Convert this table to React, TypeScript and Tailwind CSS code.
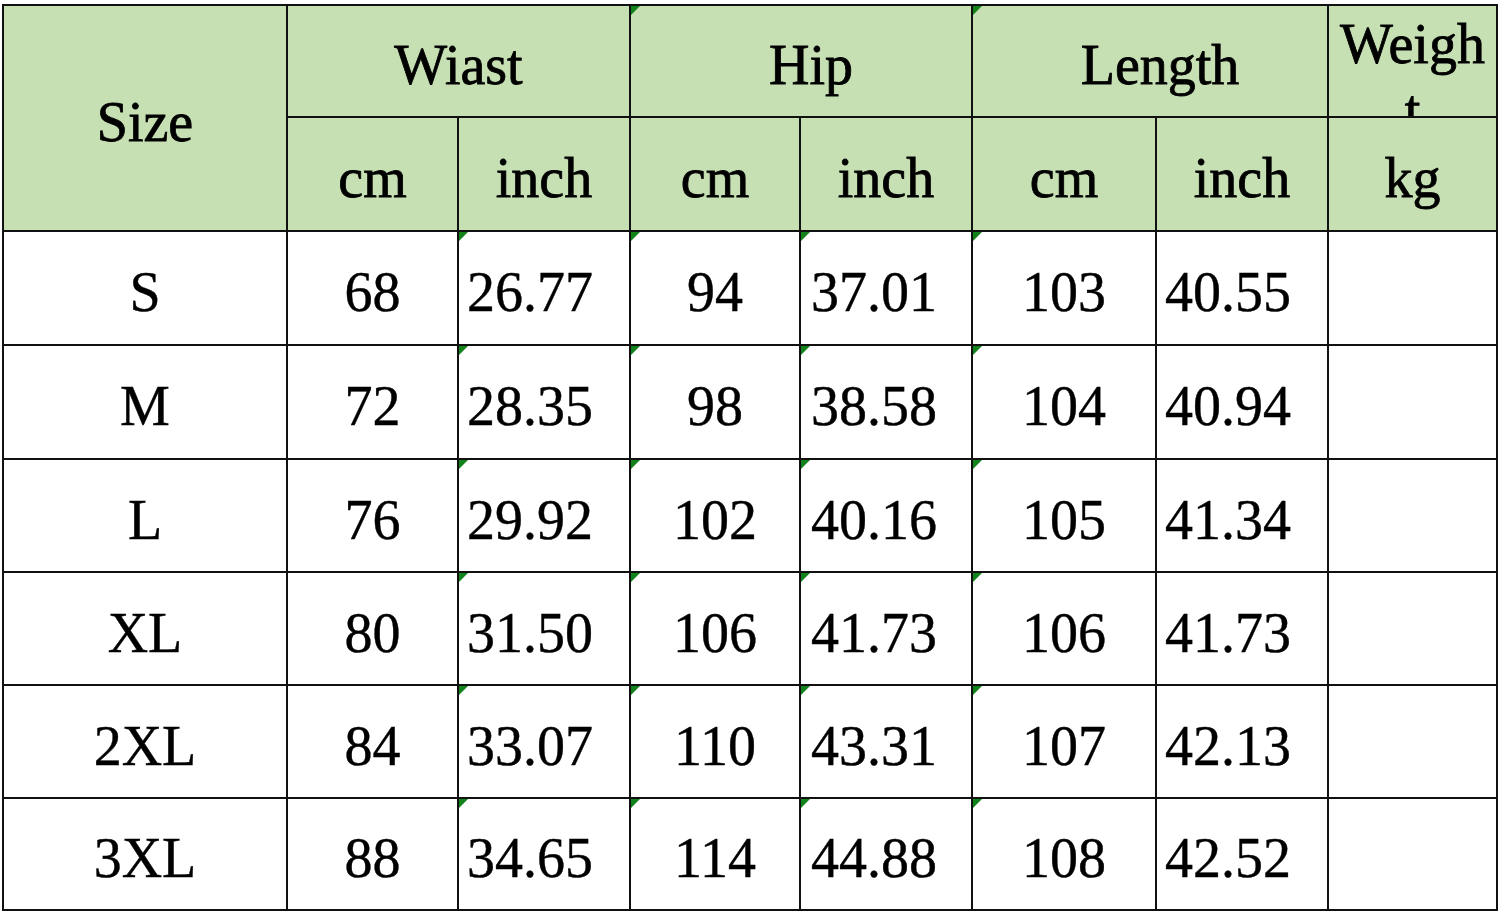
import React from "react";

const rows = [
  ["S", "68", "26.77", "94", "37.01", "103", "40.55"],
  ["M", "72", "28.35", "98", "38.58", "104", "40.94"],
  ["L", "76", "29.92", "102", "40.16", "105", "41.34"],
  ["XL", "80", "31.50", "106", "41.73", "106", "41.73"],
  ["2XL", "84", "33.07", "110", "43.31", "107", "42.13"],
  ["3XL", "88", "34.65", "114", "44.88", "108", "42.52"],
];

function Tri() {
  return (
    <div className="absolute left-0 top-0 h-0 w-0 border-t-[9px] border-r-[9px] border-t-[#12821a] border-r-transparent" />
  );
}

export default function App() {
  const font = { fontFamily: '"Liberation Serif", "DejaVu Serif", serif' };
  const head =
    "relative flex items-center justify-center bg-[#c6e0b4] pt-2 overflow-hidden [-webkit-text-stroke:0.8px_#000]";
  const cell = "relative flex items-center bg-white pt-2 overflow-hidden [-webkit-text-stroke:0.4px_#000]";
  return (
    <div className="h-[917px] w-[1500px] overflow-hidden bg-white pl-[2px] pt-[4px]" style={font}>
      <div
        className="grid w-[1496px] gap-[2px] bg-[#111] p-[2px] text-[56px] leading-none text-black"
        style={{
          gridTemplateColumns: "282px 169px 170px 168px 170px 182px 170px 167px",
          gridTemplateRows: "110px 112px 112px 112px 111px 111px 111px 110px",
        }}
      >
        <div className={head + " row-span-2"}>Size</div>
        <div className={head + " col-span-2"}>Wiast</div>
        <div className={head + " col-span-2 pl-5"}>
          <Tri />
          Hip
        </div>
        <div className={head + " col-span-2 pl-5"}>
          <Tri />
          Length
        </div>
        <div className="relative overflow-hidden bg-[#c6e0b4] pt-[5px] text-center leading-[66px] [-webkit-text-stroke:0.8px_#000]">
          Weigh
          <br />t
        </div>
        <div className={head}>cm</div>
        <div className={head}>inch</div>
        <div className={head}>cm</div>
        <div className={head}>inch</div>
        <div className={head}>cm</div>
        <div className={head}>inch</div>
        <div className={head}>kg</div>
        {rows.map((r) => (
          <React.Fragment key={r[0]}>
            <div className={cell + " justify-center"}>{r[0]}</div>
            <div className={cell + " justify-center"}>{r[1]}</div>
            <div className={cell + " pl-2"}>
              <Tri />
              {r[2]}
            </div>
            <div className={cell + " justify-center"}>
              <Tri />
              {r[3]}
            </div>
            <div className={cell + " pl-[10px]"}>
              <Tri />
              {r[4]}
            </div>
            <div className={cell + " justify-center"}>
              <Tri />
              {r[5]}
            </div>
            <div className={cell + " pl-2"}>{r[6]}</div>
            <div className={cell}></div>
          </React.Fragment>
        ))}
      </div>
    </div>
  );
}
